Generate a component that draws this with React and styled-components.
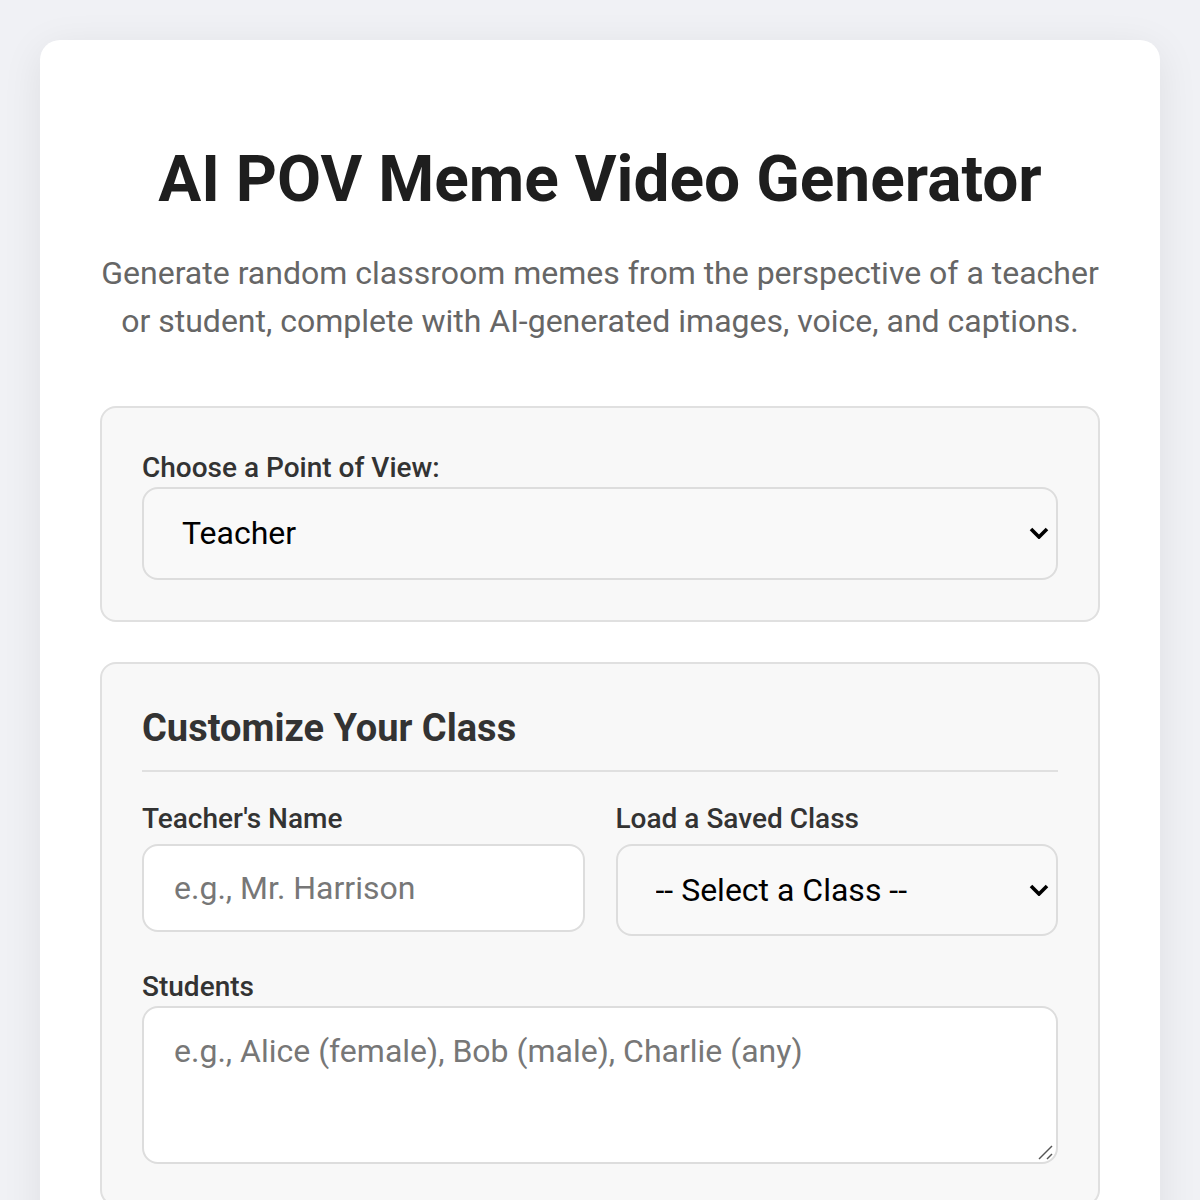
import React from "react";
import styled, { createGlobalStyle } from "styled-components";

const GlobalStyle = createGlobalStyle`
  html, body {
    margin: 0;
    padding: 0;
    background: #f0f1f5;
    font-family: Roboto, "Noto Sans", Arial, sans-serif;
  }
  body {
    padding: 40px;
  }
`;

function Chevron() {
  return (
    <Arrow width="20" height="12" viewBox="0 0 20 12" aria-hidden="true">
      <polyline
        points="2,2 10,10 18,2"
        fill="none"
        stroke="#000"
        strokeWidth="3.6"
        strokeLinejoin="miter"
      />
    </Arrow>
  );
}

function Dropdown({ id, value, tall, children }) {
  return (
    <SelectWrap>
      <Select id={id} defaultValue={value} $tall={tall}>
        {children}
      </Select>
      <Chevron />
    </SelectWrap>
  );
}

export default function App() {
  return (
    <>
      <GlobalStyle />
      <Card>
        <Title>AI POV Meme Video Generator</Title>
        <Subtitle>
          Generate random classroom memes from the perspective of a teacher or
          student, complete with AI-generated images, voice, and captions.
        </Subtitle>

        <Section>
          <Label htmlFor="pov">Choose a Point of View:</Label>
          <Dropdown id="pov" value="teacher" tall>
            <option value="teacher">Teacher</option>
            <option value="student">Student</option>
          </Dropdown>
        </Section>

        <Section>
          <SectionTitle>Customize Your Class</SectionTitle>
          <Grid>
            <Field>
              <Label htmlFor="teacher">Teacher's Name</Label>
              <Input id="teacher" placeholder="e.g., Mr. Harrison" />
            </Field>
            <Field>
              <Label htmlFor="saved">Load a Saved Class</Label>
              <Dropdown id="saved" value="">
                <option value="">-- Select a Class --</option>
              </Dropdown>
            </Field>
          </Grid>
          <Field>
            <Label htmlFor="students">Students</Label>
            <TextWrap>
              <TextArea
                id="students"
                placeholder="e.g., Alice (female), Bob (male), Charlie (any)"
              />
              <Grip width="16" height="16" viewBox="0 0 16 16" aria-hidden="true">
                <line x1="1" y1="15" x2="14" y2="2" stroke="#555" strokeWidth="1.4" />
                <line x1="9" y1="15" x2="14" y2="10" stroke="#555" strokeWidth="1.4" />
              </Grip>
            </TextWrap>
          </Field>
        </Section>
      </Card>
    </>
  );
}

const Card = styled.main`
  background: #fff;
  border-radius: 20px;
  box-shadow: 0 8px 40px rgba(0, 0, 0, 0.08);
  padding: 60px;
  min-height: 1200px;
  box-sizing: border-box;
`;

const Title = styled.h1`
  margin: 42px 0 0;
  text-align: center;
  font-size: 64px;
  font-weight: 700;
  color: #1e1e1e;
  line-height: 1.2;
`;

const Subtitle = styled.p`
  margin: 30px auto 61px;
  text-align: center;
  font-size: 32px;
  line-height: 48px;
  color: #666;
  max-width: 1000px;
`;

const Section = styled.section`
  background: #f8f8f8;
  border: 2px solid #e0e0e0;
  border-radius: 16px;
  padding: 40px;
  margin-bottom: 40px;
  display: flex;
  flex-direction: column;
`;

const SectionTitle = styled.h2`
  margin: 2px 0 27px;
  padding-bottom: 18px;
  border-bottom: 2px solid #e0e0e0;
  font-size: 38px;
  line-height: 1.2;
  font-weight: 700;
  color: #333;
`;

const Grid = styled.div`
  display: grid;
  grid-template-columns: minmax(0, 1fr) minmax(0, 1fr);
  gap: 31px;
  margin-bottom: 31px;
  label {
    margin-bottom: 6px;
  }
`;

const Field = styled.div`
  display: flex;
  flex-direction: column;
  min-width: 0;
`;

const Label = styled.label`
  font-size: 28px;
  line-height: 1.4;
  font-weight: 500;
  color: #333;
`;

const SelectWrap = styled.div`
  position: relative;
  display: flex;
`;

const Select = styled.select`
  appearance: none;
  flex: 1;
  min-width: 0;
  height: ${(p) => (p.$tall ? 93 : 92)}px;
  padding: 0 40px 0 38px;
  font-family: inherit;
  font-size: 32px;
  color: #000;
  background: #f9f9f9;
  border: 2px solid #ddd;
  border-radius: 16px;
  box-sizing: border-box;
`;

const Arrow = styled.svg`
  position: absolute;
  right: 9px;
  top: 50%;
  transform: translateY(-50%);
  pointer-events: none;
`;

const Input = styled.input`
  width: 100%;
  min-width: 0;
  height: 88px;
  padding: 0 30px;
  font-family: inherit;
  font-size: 32px;
  background: #fff;
  border: 2px solid #ddd;
  border-radius: 16px;
  box-sizing: border-box;
  &::placeholder {
    color: #777;
  }
`;

const TextWrap = styled.div`
  position: relative;
  display: flex;
`;

const TextArea = styled.textarea`
  flex: 1;
  height: 158px;
  padding: 24px 30px;
  font-family: inherit;
  font-size: 32px;
  background: #fff;
  border: 2px solid #ddd;
  border-radius: 16px;
  box-sizing: border-box;
  resize: none;
  &::placeholder {
    color: #777;
  }
`;

const Grip = styled.svg`
  position: absolute;
  right: 4px;
  bottom: 4px;
  pointer-events: none;
`;
